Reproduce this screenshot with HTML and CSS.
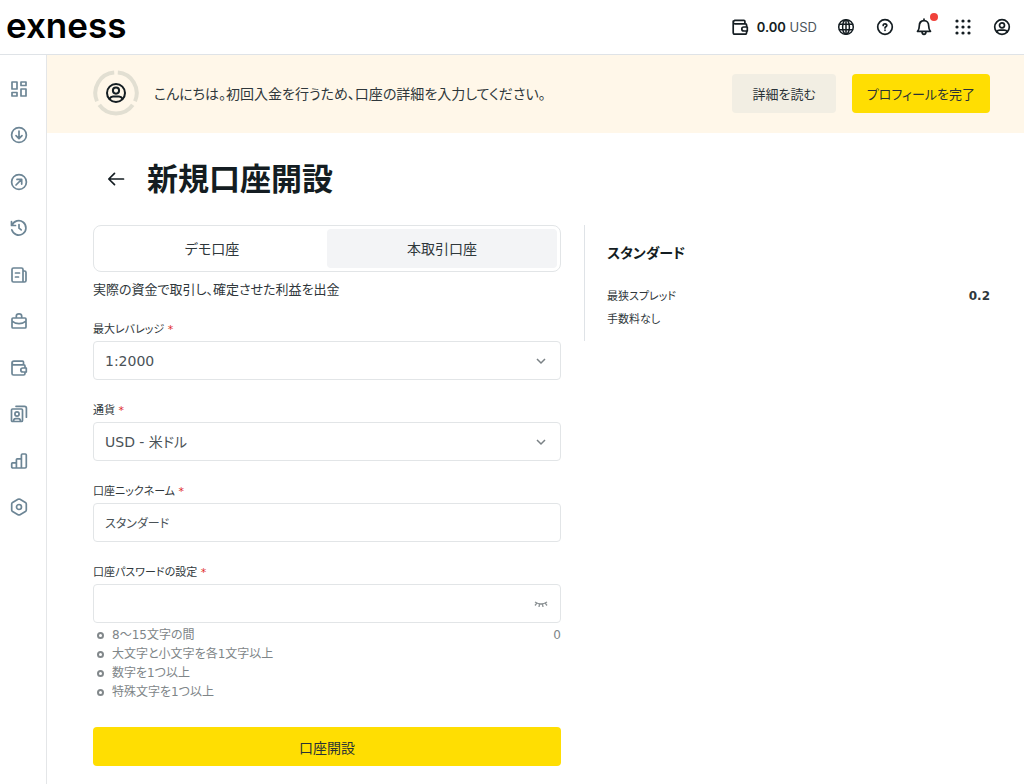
FILE: index.html
```html
<!DOCTYPE html>
<html lang="ja">
<head>
<meta charset="utf-8">
<meta name="viewport" content="width=device-width, initial-scale=1">
<title>新規口座開設</title>
<link rel="stylesheet" href="styles.css">
</head>
<body>
<header class="topbar">
  <a class="brand" href="#">exness</a>
  <div class="tools">
    <button class="balance" type="button">
      <svg class="icon" viewBox="0 0 20 20"><path d="M3.2 4.200V15.500q0 1.700 1.700 1.700h10q1.700 0 1.700-1.700v-1.500M16.600 10V8q0-1.200-1.200-1.200H5q-1.800 0-1.800-1.300T4.900 3.300h9q1 0 1 1v2.500M17.300 10h-3.500a2 2 0 0 0 0 4h3.500z"/></svg>
      <span><strong>0.00</strong> USD</span>
    </button>
    <button class="tool" type="button" aria-label="言語"><svg class="icon globe" viewBox="0 0 20 20"><circle cx="10" cy="10" r="7.300"/><ellipse cx="10" cy="10" rx="3.400" ry="7.300"/><path d="M10 2.700v14.600M3.500 7.300h13M3.500 12.700h13"/></svg></button>
    <button class="tool" type="button" aria-label="ヘルプ"><svg class="icon" viewBox="0 0 20 20"><circle cx="10" cy="10" r="7.300"/><path d="M8.200 8.500c0-2.300 3.600-2.200 3.600 0 0 1.300-1.800 1.300-1.800 2.400M10 13v.3"/></svg></button>
    <button class="tool" type="button" aria-label="通知"><svg class="icon" viewBox="0 0 20 20"><path d="M3.500 14.300h13c-1.500-1.400-1.800-2.600-1.800-5.300 0-3.300-1.900-5.300-4.700-5.300S5.300 5.700 5.300 9c0 2.700-.3 3.900-1.800 5.300zM8 14.500c0 3.700 4 3.700 4 0M10 2v1.500"/></svg><span class="dot"></span></button>
    <button class="tool" type="button" aria-label="アプリ"><svg class="icon solid" viewBox="0 0 20 20"><circle cx="4" cy="4" r="1.600"/><circle cx="10" cy="4" r="1.600"/><circle cx="16" cy="4" r="1.600"/><circle cx="4" cy="10" r="1.600"/><circle cx="10" cy="10" r="1.600"/><circle cx="16" cy="10" r="1.600"/><circle cx="4" cy="16" r="1.600"/><circle cx="10" cy="16" r="1.600"/><circle cx="16" cy="16" r="1.600"/></svg></button>
    <button class="tool" type="button" aria-label="プロフィール"><svg class="icon" viewBox="0 0 20 20"><circle cx="10" cy="10" r="7.300"/><circle cx="10" cy="8.300" r="2.500"/><path d="M4.700 14.800q1-1.700 3-1.700h4.600q2 0 3 1.700"/></svg></button>
  </div>
</header>
<div class="shell">
  <nav class="side" aria-label="メニュー">
    <div class="side-list">
      <a href="#" aria-label="ダッシュボード"><svg class="icon" viewBox="0 0 20 20"><path d="M3 3h5v7H3zM12 3h5v3.500h-5zM3 13.500h5V17H3zM12 10h5v7h-5z"/></svg></a>
      <a href="#" aria-label="入金"><svg class="icon" viewBox="0 0 20 20"><circle cx="10" cy="10" r="7.400"/><path d="M10 6v7.500M7 10.700l3 3 3-3"/></svg></a>
      <a href="#" aria-label="出金"><svg class="icon" viewBox="0 0 20 20"><circle cx="10" cy="10" r="7.400"/><path d="M7 13l5.500-5.500M8 7.400h4.700v4.700"/></svg></a>
      <a href="#" aria-label="取引履歴"><svg class="icon" viewBox="0 0 20 20"><path d="M2.500 3.500v4h4M3 7.300a7.200 7.200 0 1 1-.2 4.500M10 6.500v3.700l2.200 1.700"/></svg></a>
      <a href="#" aria-label="ニュース"><svg class="icon" viewBox="0 0 20 20"><path d="M4.500 3h8q1.500 0 1.500 1.500V17H4.500Q3 17 3 15.500v-11Q3 3 4.500 3zM14 6h1.500Q17 6 17 7.500v8q0 1.500-1.500 1.500H13M6.500 8h4M6.500 12h3"/></svg></a>
      <a href="#" aria-label="ポートフォリオ"><svg class="icon" viewBox="0 0 20 20"><path d="M4 7h12q1 0 1 1v8q0 1-1 1H4q-1 0-1-1V8q0-1 1-1zM7.300 7V5.200c0-3 5.400-3 5.400 0V7M3 10.200c4 3.300 10 3.300 14 0"/></svg></a>
      <a href="#" aria-label="ウォレット"><svg class="icon" viewBox="0 0 20 20"><path d="M3 4.500v11Q3 17 4.500 17h10q1.500 0 1.500-1.500V14M16 10V8q0-1.200-1.200-1.200H5Q3 6.800 3 5t2-1.900h8.500q1 0 1 1v2.700M17.300 10h-3.500a2 2 0 0 0 0 4h3.500z"/></svg></a>
      <a href="#" aria-label="コピー取引"><svg class="icon" viewBox="0 0 20 20"><path d="M3.500 5h9q1 0 1 1v10.500q0 1-1 1h-9q-1 0-1-1V6q0-1 1-1zM7 2.300h8.500q1.900 0 1.900 1.900v9M4.500 17q.3-2.300 2-2.300h3q1.700 0 2 2.300"/><circle cx="8" cy="10" r="2.100"/></svg></a>
      <a href="#" aria-label="分析"><svg class="icon" viewBox="0 0 20 20"><path d="M7.400 17H4q-1.300 0-1.300-1.300v-3q0-.8.8-.8h3.900zM7.400 17V8.700q0-.8.800-.8h4.200V17zM12.400 17V4q0-1 1-1h2.900q1 0 1 1v11.700q0 1.300-1.300 1.300z"/></svg></a>
      <a href="#" aria-label="設定"><svg class="icon" viewBox="0 0 20 20"><path d="M9 2.300q1-.5 2 0l5.400 3.100q.9.600.9 1.600v6q0 1-.9 1.600L11 17.700q-1 .5-2 0l-5.400-3.100q-.9-.6-.9-1.600V7q0-1 .9-1.600z"/><circle cx="10" cy="10" r="2.500"/></svg></a>
    </div>
  </nav>
  <div class="page">
    <section class="banner">
      <svg class="ring" viewBox="0 0 46 46"><g class="arcs"><path d="M24.800 2.600A20.500 20.500 0 0 1 42 31.200"/><path d="M39.700 34.900A20.500 20.500 0 0 1 6.300 34.900"/><path d="M4 31.200A20.500 20.500 0 0 1 21.200 2.600"/></g><g class="person"><circle cx="23" cy="23" r="9"/><circle cx="23" cy="20.600" r="3.100"/><path d="M16.500 28.800q1.200-2.200 3.500-2.200h6q2.300 0 3.500 2.200"/></g></svg>
      <p class="greeting">こんにちは。初回入金を行うため、口座の詳細を入力してください。</p>
      <div class="actions">
        <button class="btn muted" type="button">詳細を読む</button>
        <button class="btn primary" type="button">プロフィールを完了</button>
      </div>
    </section>
    <main class="content">
      <div class="heading">
        <a class="back" href="#" aria-label="戻る"><svg class="icon" viewBox="0 0 20 20"><path d="M17.500 10H3M8.500 4.300L2.800 10l5.700 5.700"/></svg></a>
        <h1>新規口座開設</h1>
      </div>
      <div class="columns">
        <form class="form">
          <div class="tabs">
            <button type="button" class="tab">デモ口座</button>
            <button type="button" class="tab active">本取引口座</button>
          </div>
          <p class="desc">実際の資金で取引し、確定させた利益を出金</p>
          <div class="field">
            <label for="leverage">最大レバレッジ <span class="req">*</span></label>
            <div class="control">
              <select id="leverage"><option>1:2000</option></select>
              <svg class="chevron" viewBox="0 0 12 12"><path d="M2 4l4 4 4-4"/></svg>
            </div>
          </div>
          <div class="field">
            <label for="currency">通貨 <span class="req">*</span></label>
            <div class="control">
              <select id="currency"><option>USD - 米ドル</option></select>
              <svg class="chevron" viewBox="0 0 12 12"><path d="M2 4l4 4 4-4"/></svg>
            </div>
          </div>
          <div class="field">
            <label for="nickname">口座ニックネーム <span class="req">*</span></label>
            <div class="control"><input id="nickname" type="text" value="スタンダード"></div>
          </div>
          <div class="field last">
            <label for="password">口座パスワードの設定 <span class="req">*</span></label>
            <div class="control">
              <input id="password" type="password">
              <button class="eye" type="button" aria-label="パスワードを表示"><svg viewBox="0 0 14 10"><path d="M1 3q6 4 12 0M2.800 4.200L1 6.500M5.500 5.300L5 8M8.500 5.300L9 8M11.200 4.200L13 6.500"/></svg></button>
            </div>
          </div>
          <div class="rules">
            <ul>
              <li>8～15文字の間</li>
              <li>大文字と小文字を各1文字以上</li>
              <li>数字を1つ以上</li>
              <li>特殊文字を1つ以上</li>
            </ul>
            <span>0</span>
          </div>
          <button class="btn primary submit" type="submit">口座開設</button>
        </form>
        <aside class="summary">
          <h2>スタンダード</h2>
          <dl>
            <div><dt>最狭スプレッド</dt><dd>0.2</dd></div>
            <div><dt>手数料なし</dt></div>
          </dl>
        </aside>
      </div>
    </main>
  </div>
</div>
</body>
</html>
```
FILE: styles.css
```css
* { box-sizing: border-box; }
body {
  margin: 0;
  min-height: 100vh;
  display: flex;
  flex-direction: column;
  background: #fff;
  color: #141d22;
  font-family: "DejaVu Sans", "Noto Sans CJK JP", sans-serif;
  font-size: 14px;
}
body, button, input, select { font-feature-settings: "palt"; }
button, input, select { font-family: inherit; font-size: 14px; color: inherit; }
button { border: 0; padding: 0; background: none; cursor: pointer; }
h1, h2, p, ul, dl, dd { margin: 0; padding: 0; }
.icon {
  display: block;
  width: 20px;
  height: 20px;
  fill: none;
  stroke: currentColor;
  stroke-width: 1.700;
  stroke-linecap: round;
  stroke-linejoin: round;
}
.icon.solid { fill: currentColor; stroke: none; }
.icon.globe { stroke-width: 1.500; }

.topbar {
  display: flex;
  align-items: center;
  justify-content: space-between;
  height: 55px;
  padding: 0 12px 0 6px;
  border-bottom: 1px solid #dfe3e7;
}
.brand {
  padding-bottom: 4px;
  font: 600 35px/48px Inter, sans-serif;
  color: #000;
  text-decoration: none;
}
.tools { display: flex; align-items: center; gap: 19px; }
.balance {
  display: flex;
  align-items: center;
  gap: 7px;
  font-family: Inter, sans-serif;
  font-size: 13px;
  color: #4c555b;
}
.balance .icon { color: #141d22; }
.balance strong { font-weight: 600; color: #141d22; }
.tool { position: relative; color: #141d22; }
.dot {
  position: absolute;
  top: -4px;
  right: -4px;
  width: 8px;
  height: 8px;
  border-radius: 50%;
  background: #f0413a;
}

.shell { flex: 1; display: flex; }
.side {
  width: 47px;
  padding: 24px 0 0 9px;
  border-right: 1px solid #e4e6e8;
}
.side-list {
  display: flex;
  flex-direction: column;
  justify-content: space-between;
  height: 438px;
}
.side a { width: 20px; color: #6c8595; }
.page { flex: 1; min-width: 0; }

.banner {
  display: flex;
  align-items: center;
  gap: 15px;
  min-height: 78px;
  padding: 0 34px 2px 46px;
  background: #fff7e9;
}
.ring { width: 46px; height: 46px; fill: none; stroke-linecap: round; }
.arcs { stroke: #e2dfd2; stroke-width: 4; stroke-linecap: butt; }
.person { stroke: #141d22; stroke-width: 2; }
.greeting { flex: 1; font-size: 14px; color: #2f373b; }
.actions { display: flex; gap: 16px; }
.btn { height: 39px; border-radius: 4px; color: #2a3236; }
.actions .btn { font-size: 13px; }
.muted { padding: 0 20px; background: #f2eee3; }
.primary { padding: 0 15px; background: #ffde02; }

.content { padding: 24px 34px 17px 46px; }
.heading { display: flex; align-items: center; gap: 21px; padding-left: 13px; }
.back { color: #141d22; }
.heading h1 { font-size: 31px; line-height: 44px; }
.columns {
  display: grid;
  grid-template-columns: 468fr 406fr;
  gap: 23px;
  align-items: start;
  margin-top: 24px;
}
.tabs {
  display: grid;
  grid-template-columns: 1fr 1fr;
  padding: 3px;
  border: 1px solid #e2e5e7;
  border-radius: 8px;
}
.tab { height: 39px; padding-bottom: 2px; border-radius: 4px; color: #2f373b; }
.tab.active { background: #f3f4f6; }
.desc { margin: 8px 0 22px; font-size: 13px; line-height: 20px; color: #2f373b; }
.field { margin-bottom: 23px; }
.field.last { margin-bottom: 3px; }
.field label { display: block; margin-bottom: 3px; font-size: 11px; line-height: 16px; color: #2f373b; }
.req { color: #e02b2b; }
.control { display: grid; align-items: center; }
.control > * { grid-area: 1 / 1; }
.control select,
.control input {
  appearance: none;
  width: 100%;
  height: 39px;
  padding: 0 11px;
  border: 1px solid #e2e5e7;
  border-radius: 4px;
  background: #fff;
  color: #4a5257;
}
.control input { font-size: 12px; }
.chevron {
  justify-self: end;
  width: 12px;
  margin-right: 14px;
  fill: none;
  stroke: #7a8185;
  stroke-width: 1.500;
  pointer-events: none;
}
.eye { justify-self: end; margin-right: 13px; }
.eye svg {
  display: block;
  width: 14px;
  height: 10px;
  fill: none;
  stroke: #8b9194;
  stroke-width: 1.300;
}
.rules {
  display: flex;
  justify-content: space-between;
  font-size: 12px;
  line-height: 19px;
  color: #7e8588;
}
.rules ul { list-style: none; }
.rules li { display: flex; align-items: center; gap: 8px; padding-left: 4px; }
.rules li::before {
  content: "";
  box-sizing: border-box;
  width: 7px;
  height: 7px;
  border: 2px solid #82888b;
  border-radius: 50%;
}
.submit { width: 100%; margin-top: 25px; }

.summary { padding: 16px 0 10px 22px; border-left: 1px solid #dfe3e7; }
.summary h2 { font-size: 14px; line-height: 24px; }
.summary dl { margin-top: 20px; font-size: 12px; line-height: 23px; color: #2f373b; }
.summary dl div { display: flex; justify-content: space-between; }
.summary dt { font-size: 11px; }
.summary dd { font-weight: bold; }
```
